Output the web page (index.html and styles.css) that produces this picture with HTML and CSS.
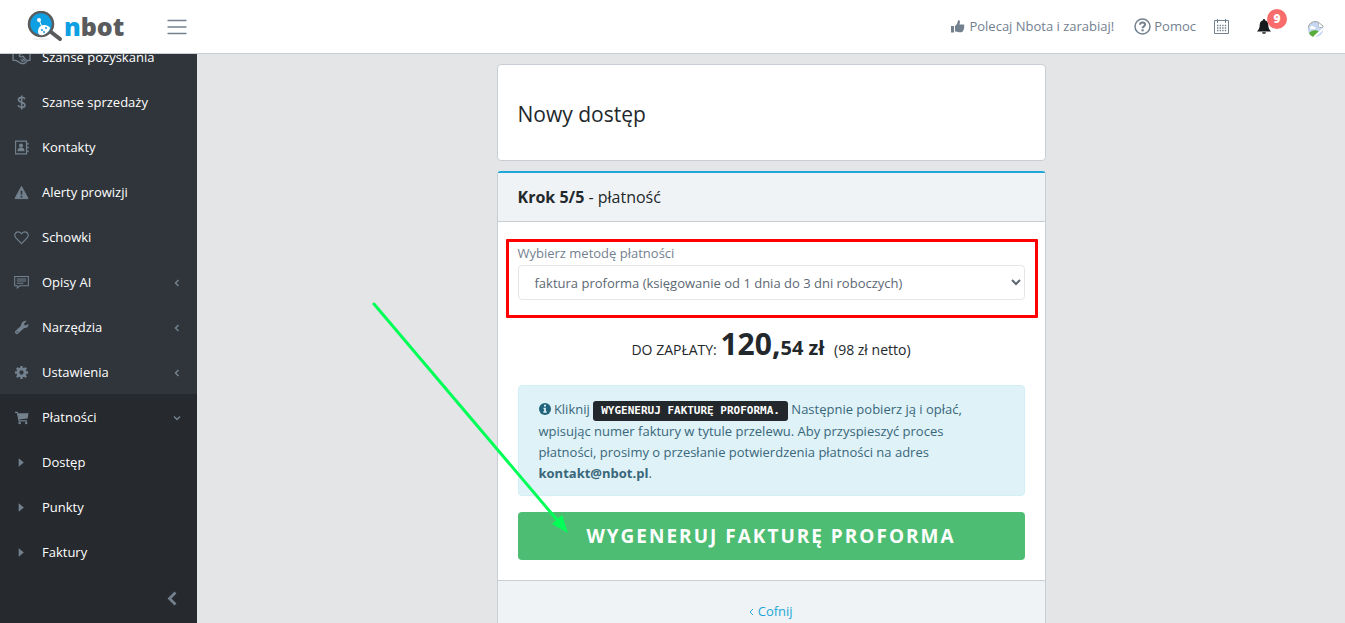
FILE: index.html
```html
<!DOCTYPE html>
<html lang="pl">
<head>
<meta charset="utf-8">
<title>nbot – Nowy dostęp</title>
<link rel="stylesheet" href="styles.css">
</head>
<body>
<header class="topbar">
  <a class="brand" href="#">
    <svg width="36" height="32" viewBox="0 0 36 32" aria-hidden="true">
      <ellipse cx="14" cy="28" rx="9" ry="1" fill="#eee"/>
      <path d="M24 21l9 7" stroke="#5a5b5d" stroke-width="4" stroke-linecap="round"/>
      <circle cx="14" cy="13" r="12" fill="#0f9fe3" stroke="#5a5b5d" stroke-width="2.500"/>
      <circle cx="12" cy="9" r="2" fill="#fff"/>
      <path d="M12 9l3 7" stroke="#fff" stroke-width="1"/>
      <path d="M11 21c0-4 2-7 6-7 3 0 6 2 6 3 0 2-3 6-7 7-3 1-5-1-5-3z" fill="#fff"/>
      <circle cx="15" cy="19" r="1" fill="#0f9fe3"/><circle cx="19" cy="17" r="1" fill="#0f9fe3"/><circle cx="17" cy="21" r="1" fill="#0f9fe3"/>
    </svg>
    <span class="brand-text"><span class="brand-n">n</span>bot</span>
  </a>
  <button class="menu-btn" type="button" aria-label="Menu">
    <svg width="20" height="16" viewBox="0 0 20 16"><path d="M1 1.500h18M1 8h18M1 14.500h18" stroke="#73818f" stroke-width="1.300" stroke-linecap="round"/></svg>
  </button>
  <nav class="top-links">
    <a class="top-link" href="#">
      <svg width="14" height="13" viewBox="0 0 14 13" fill="#73818f"><path d="M0 6h3v6.500H0zM4 6l2-2 1-3.500C7.500-.2 9 .2 9 2.200L8.400 4.500H12c1.500 0 1.700 1.300 1 2 .5.700.4 1.400-.2 2 .3.800 0 1.400-.6 1.800 0 1-.5 1.900-2 1.900H8C6.500 12.200 5.500 11.500 4 11.500z"/></svg>
      Polecaj Nbota i zarabiaj!</a>
    <a class="top-link help" href="#">
      <svg width="17" height="17" viewBox="0 0 17 17" fill="none" stroke="#73818f"><circle cx="8.500" cy="8.500" r="7.500" stroke-width="1.500"/><path d="M6 6.700c.2-3 5-2.700 5 0C11 8.400 8.600 8.400 8.600 10.200" stroke-width="2"/><path d="M7.500 12.300h2.200" stroke-width="2"/></svg>
      Pomoc</a>
    <a class="top-link cal" href="#" aria-label="Kalendarz">
      <svg width="15" height="15" viewBox="0 0 15 15" fill="none" stroke="#73818f"><path d="M.5 1.500h14v13H.5zM3.500 0v4M11.500 0v4"/><path d="M3 6.500h10M3 9h10M3 11.500h10" stroke-width="1.300" stroke-dasharray="1.400 1.200"/></svg>
    </a>
    <a class="top-link bell" href="#" aria-label="Powiadomienia">
      <svg width="14" height="15" viewBox="0 0 14 15" fill="#181b1e"><path d="M7 0c.7 0 1 .4 1 1.200C10.500 1.800 11.200 3.800 11.300 6c.1 3 .9 4.500 2.700 6.500H0C1.800 10.500 2.600 9 2.700 6 2.800 3.800 3.500 1.800 6 1.200 6 .4 6.300 0 7 0zM5 13.300h4c-.3 2-3.700 2-4 0z"/></svg>
      <span class="badge">9</span>
    </a>
    <a class="top-link avatar" href="#" aria-label="Profil">
      <svg width="16" height="16" viewBox="0 0 16 16"><path d="M2 3c2-3 8-3 10-1l3 3v5c-1 4-5 6-8 6-4 0-7-3-7-7 0-2 1-4 2-6z" fill="#c6d7f2"/><path d="M2 3c2-3 8-3 9-1M0 8c0-2 1-4 2-5M15 5l-4-3v4h4z" fill="none" stroke="#9a9a9a"/><path d="M11 2v4h4z" fill="#fff"/><path d="M2 7c1-3 3-2 4-1 2 0 2 2 1 2H2z" fill="#fff"/><path d="M1 12c2-3 8-4 10-1l-4 5C4 16 2 14 1 12z" fill="#58ad3a"/><path d="M6 16l9-8" stroke="#fff" stroke-width="2"/></svg>
    </a>
  </nav>
</header>
<div class="shell">
  <aside class="sidebar">
    <nav class="side-nav">
      <ul class="side-list">
        <li><a class="side-link" href="#"><svg class="ico wide" viewBox="0 0 20 16" fill="none" stroke="#73818f" stroke-width="1.400"><path d="M1 3h3l2-1.500h3L10.500 3 12 1.500h3L16.500 3H19v8h-2l-4 3.500h-3L4 11H1zM10.500 3L7.500 6c1 2 3 1.500 4 .5l4 4.500M9 10l3 3M11 9l3 3"/></svg><span>Szanse pozyskania</span></a></li>
        <li><a class="side-link" href="#"><svg class="ico" viewBox="0 0 16 16" fill="none" stroke="#73818f" stroke-width="1.700"><path d="M11.500 4.500C10.500 1.500 4.800 2 4.800 5c0 3.300 6.900 2.300 6.900 5.800 0 3-6.200 3.300-7.200 0M8.200.5v15"/></svg><span>Szanse sprzedaży</span></a></li>
        <li><a class="side-link" href="#"><svg class="ico" viewBox="0 0 16 16" fill="#73818f"><path d="M1.700 1.200h11.600v13.600H1.700z" fill="none" stroke="#73818f" stroke-width="1.200"/><circle cx="7.500" cy="5.800" r="2.200"/><path d="M3.800 12c0-3 1.200-4 3.700-4s3.700 1 3.700 4zM14 3h1.500v2H14zM14 7h1.500v2H14zM14 11h1.500v2H14z"/></svg><span>Kontakty</span></a></li>
        <li><a class="side-link" href="#"><svg class="ico" viewBox="0 0 16 16"><path d="M8 1.500L15 14.500H1z" fill="#73818f" stroke="#73818f" stroke-linejoin="round"/><path d="M8 6v4M8 11.500v1.800" stroke="#2f353a" stroke-width="1.800"/></svg><span>Alerty prowizji</span></a></li>
        <li><a class="side-link" href="#"><svg class="ico" viewBox="0 0 16 16" fill="none" stroke="#73818f" stroke-width="1.200"><path d="M8 14.500L1.800 8.200C-.2 5.500 1.300 2 4.500 2 6.500 2 7.300 3.200 8 4c.7-.8 1.500-2 3.500-2 3.200 0 4.700 3.500 2.700 6.200z"/></svg><span>Schowki</span></a></li>
        <li><a class="side-link" href="#"><svg class="ico" viewBox="0 0 16 16" fill="none" stroke="#73818f" stroke-width="1.100"><path d="M.7 1.500h14.600v10H6L3.500 14v-2.500H.7zM3 4.200h10M3 6.500h10M3 8.800h7"/></svg><span>Opisy AI</span><svg class="arrow" viewBox="0 0 8 8"><path d="M5.500 1L2.500 4l3 3"/></svg></a></li>
        <li><a class="side-link" href="#"><svg class="ico" viewBox="0 0 16 16"><path d="M3 13L9.500 7" stroke="#73818f" stroke-width="4" stroke-linecap="round"/><path d="M13.500 1L10.800 3.800l.2 1.500 1.700.5L15.500 4c.3 3-2 5-4.700 4.600C8 8.500 7 6 8 3.700 9 1.500 11.500.4 13.500 1z" fill="#73818f"/><circle cx="3.300" cy="12.800" r=".7" fill="#2f353a"/></svg><span>Narzędzia</span><svg class="arrow" viewBox="0 0 8 8"><path d="M5.500 1L2.500 4l3 3"/></svg></a></li>
        <li><a class="side-link" href="#"><svg class="ico" viewBox="0 0 16 16" fill="none" stroke="#73818f"><circle cx="8" cy="8" r="3.800" stroke-width="3"/><path d="M8 1v2.500M8 12.500V15M1 8h2.500M12.500 8H15M3 3l2 2M11 11l2 2M13 3l-2 2M5 11l-2 2" stroke-width="2.600"/></svg><span>Ustawienia</span><svg class="arrow" viewBox="0 0 8 8"><path d="M5.500 1L2.500 4l3 3"/></svg></a></li>
        <li class="open"><a class="side-link" href="#"><svg class="ico" viewBox="0 0 16 16" fill="#73818f"><path d="M1 2.500h2.500l2 9H14" fill="none" stroke="#73818f" stroke-width="1.300"/><path d="M4 3.500h11.500L14.500 9 5 10z"/><circle cx="6" cy="13.800" r="1.300"/><circle cx="13" cy="13.800" r="1.300"/></svg><span>Płatności</span><svg class="arrow" viewBox="0 0 8 8"><path d="M1 2.500l3 3 3-3"/></svg></a>
          <ul class="side-list">
            <li><a class="side-link" href="#"><svg class="ico" viewBox="0 0 16 16" fill="#73818f"><path d="M5 3.500v9L10.500 8z"/></svg><span>Dostęp</span></a></li>
            <li><a class="side-link" href="#"><svg class="ico" viewBox="0 0 16 16" fill="#73818f"><path d="M5 3.500v9L10.500 8z"/></svg><span>Punkty</span></a></li>
            <li><a class="side-link" href="#"><svg class="ico" viewBox="0 0 16 16" fill="#73818f"><path d="M5 3.500v9L10.500 8z"/></svg><span>Faktury</span></a></li>
          </ul>
        </li>
      </ul>
    </nav>
    <button class="minimizer" type="button" aria-label="Zwiń menu"><svg width="10" height="15" viewBox="0 0 10 15"><path d="M8.500 1.500l-6 6 6 6" fill="none" stroke="#73818f" stroke-width="2.800"/></svg></button>
  </aside>
  <main class="main">
    <div class="column">
      <section class="card title-card"><h1 class="title">Nowy dostęp</h1></section>
      <section class="card step-card">
        <h2 class="card-header"><b>Krok 5/5</b> - płatność</h2>
        <form class="card-body">
          <div class="field">
            <label class="label" for="method">Wybierz metodę płatności</label>
            <select class="select" id="method"><option>faktura proforma (księgowanie od 1 dnia do 3 dni roboczych)</option></select>
            <div class="highlight"></div>
          </div>
          <p class="total">DO ZAPŁATY: <b class="sum">120,</b><b class="cents">54 zł</b> <span class="net">(98 zł netto)</span></p>
          <p class="alert"><svg class="info" viewBox="0 0 12 12"><circle cx="6" cy="6" r="6" fill="#20637a"/><path d="M5 2.700h2M4.500 5.500H6v3.500M4.300 9h3.400" stroke="#dff2f8" stroke-width="1.700" fill="none"/></svg> Kliknij <kbd class="kbd">WYGENERUJ FAKTURĘ PROFORMA.</kbd> Następnie pobierz ją i opłać, wpisując numer faktury w tytule przelewu. Aby przyspieszyć proces płatności, prosimy o przesłanie potwierdzenia płatności na adres <b>kontakt@nbot.pl</b>.</p>
          <div class="action">
            <button class="submit" type="button">WYGENERUJ FAKTURĘ PROFORMA</button>
            <svg class="pointer" width="200" height="236" viewBox="0 0 200 236"><path d="M2 2l184 217" stroke="#00ff57" stroke-width="3" stroke-linecap="round"/><path d="M196 231l-16-9 10-9z" fill="#00ff57"/></svg>
          </div>
        </form>
        <footer class="card-footer"><a class="back" href="#"><svg width="5" height="8" viewBox="0 0 5 8"><path d="M4 1L1 4l3 3" fill="none" stroke="#20a8d8"/></svg> Cofnij</a></footer>
      </section>
    </div>
  </main>
</div>
</body>
</html>
```

FILE: styles.css
```css
* { box-sizing: border-box; }
body {
  margin: 0;
  height: 100vh;
  display: flex;
  flex-direction: column;
  overflow: hidden;
  background: #e4e5e6;
  color: #23282c;
  font: 13px/21px "Segoe UI", "Open Sans", "Noto Sans", sans-serif;
}
a { text-decoration: none; }
svg { flex: none; }
button { border: 0; background: none; padding: 0; font: inherit; cursor: pointer; }

.topbar {
  flex: none;
  height: 54px;
  display: flex;
  align-items: center;
  background: #fff;
  border-bottom: 1px solid #c8ced3;
}
.brand { display: flex; align-items: center; gap: 1px; margin-left: 27px; width: 140px; }
.brand-text { font: 800 25px/30px "Open Sans", sans-serif; color: #5a5b5d; padding-bottom: 2px; }
.brand-n { color: #0f9fe3; }
.menu-btn { display: flex; }
.top-links { display: flex; align-items: center; margin-left: auto; padding-right: 21px; }
.top-link { display: flex; align-items: center; gap: 4px; color: #73818f; }
.help { margin-left: 20px; gap: 3px; }
.cal { margin-left: 18px; }
.bell { position: relative; margin-left: 28px; }
.badge {
  position: absolute;
  left: 10px;
  bottom: 5px;
  width: 20px;
  height: 20px;
  border-radius: 10px;
  background: #f86c6b;
  color: #fff;
  font-size: 12px;
  font-weight: 800;
  line-height: 20px;
  text-align: center;
}
.avatar { margin-left: 37px; padding-top: 4px; }

.shell { flex: 1; min-height: 0; display: flex; }
.sidebar {
  flex: none;
  width: 197px;
  display: flex;
  flex-direction: column;
  background: #2f353a;
}
.side-nav {
  flex: 1;
  min-height: 0;
  overflow: hidden;
  display: flex;
  flex-direction: column;
  justify-content: flex-end;
}
.side-list { list-style: none; margin: 0; padding: 0; }
.side-link {
  height: 45px;
  display: flex;
  align-items: center;
  gap: 13px;
  padding: 2px 16px 0 14px;
  color: #fff;
}
.ico { width: 15px; height: 15px; }
.wide { width: 19px; margin: 0 -2px; }
.open { background: #26292d; }
.arrow { width: 8px; height: 8px; margin-left: auto; fill: none; stroke: #73818f; stroke-width: 1.500; }
.minimizer {
  flex: none;
  height: 49px;
  display: flex;
  align-items: center;
  justify-content: flex-end;
  padding-right: 20px;
  background: #26292d;
}

.main { flex: 1; min-width: 0; padding: 10px 16px 0; overflow: hidden; }
.column { max-width: 549px; margin: 0 auto; display: flex; flex-direction: column; gap: 10px; }
.card { background: #fff; border: 1px solid #c8ced3; border-radius: 4px; }
.title-card { padding: 37px 20px 34px; }
.title { margin: 0; font-size: 21px; font-weight: 500; line-height: 24px; }
.step-card { border-top: 2px solid #20a8d8; }
.card-header {
  margin: 0;
  padding: 12px 20px;
  font-size: 16px;
  font-weight: 400;
  line-height: 24px;
  background: #f0f3f5;
  border-bottom: 1px solid #c8ced3;
}
.card-body { padding: 21px 20px 20px; }
.field { position: relative; }
.label { display: block; line-height: 20px; padding-bottom: 2px; color: #73818f; }
.select {
  width: 100%;
  height: 35px;
  padding: 6px 12px;
  border: 1px solid #e4e7ea;
  border-radius: 4px;
  background: #fff;
  color: #5c6873;
  font: inherit;
}
.highlight {
  position: absolute;
  inset: -4px -13px -18px -12px;
  border: 3px solid #ff0000;
  border-radius: 1px;
  pointer-events: none;
}
.total { margin: 26px 0 23px; font-size: 14px; line-height: 20px; text-align: center; }
.sum { font-size: 30px; line-height: 36px; }
.cents { font-size: 20px; }
.net { margin-left: 6px; }
.alert {
  margin: 0 0 16px;
  padding: 13px 20px 11px;
  border: 1px solid #d2eff5;
  border-radius: 4px;
  background: #dff2f8;
  color: #39677a;
}
.info { width: 12px; height: 12px; vertical-align: -1px; }
.kbd {
  display: inline-block;
  padding: 3px 8px;
  border-radius: 3px;
  background: #23282c;
  color: #fff;
  font: 700 11px/14px "DejaVu Sans Mono", monospace;
}
.action { position: relative; }
.submit {
  width: 100%;
  height: 48px;
  border-radius: 4px;
  background: #4dbd74;
  color: #fff;
  font-size: 19px;
  font-weight: 700;
  letter-spacing: 2px;
}
.pointer { position: absolute; left: -146px; top: -210px; pointer-events: none; }
.card-footer {
  padding: 20px;
  background: #f0f3f5;
  border-top: 1px solid #c8ced3;
  text-align: center;
}
.back { color: #20a8d8; }
```
